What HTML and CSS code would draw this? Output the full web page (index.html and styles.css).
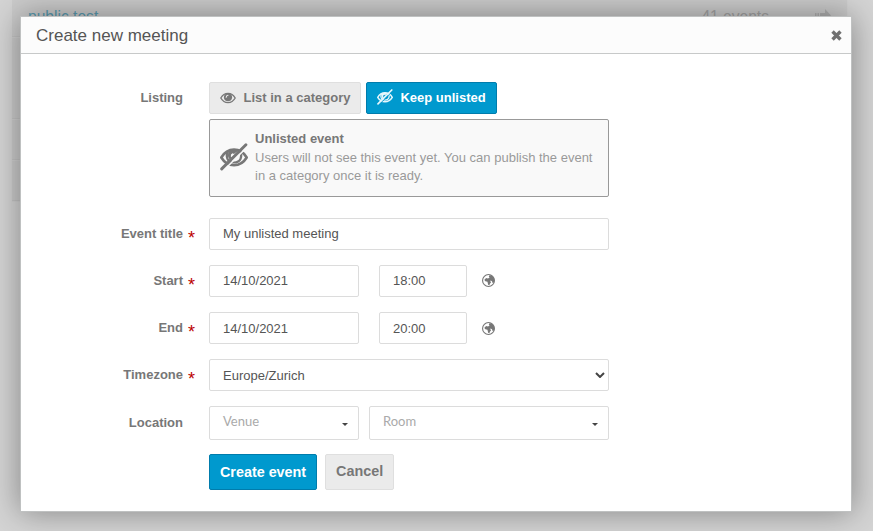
FILE: index.html
```html
<!DOCTYPE html>
<html lang="en">
<head>
<meta charset="utf-8">
<title>Create new meeting</title>
<link rel="stylesheet" href="styles.css">
</head>
<body>
<svg class="defs" aria-hidden="true">
  <symbol id="eye" viewBox="0 0 16 16">
    <path fill="none" stroke="currentColor" stroke-width="1.300" d="M.8 8C2.600 4.800 5 3.400 8 3.400S13.400 4.800 15.200 8C13.400 11.200 11 12.600 8 12.600S2.600 11.200.8 8Z"/>
    <path fill="currentColor" d="M4.600 4.500Q8 2.500 11.400 4.500Q13 8 11 10.200Q8 12.300 5 10.200Q3 8 4.600 4.500Z"/>
    <path fill="none" stroke="#ebebeb" stroke-width="1.100" stroke-linecap="round" d="M6.200 7.200Q6.300 5.500 8 5.300"/>
  </symbol>
  <symbol id="eye-off" viewBox="0 0 28 28">
    <path fill="none" stroke="currentColor" stroke-width="2.600" d="M1.300 14.500C4.500 9 9 6.600 14 6.600s9.500 2.400 12.700 7.900C23.500 19.800 19 22.200 14 22.200S4.500 19.800 1.300 14.500Z"/>
    <path fill="none" stroke="currentColor" stroke-width="2.200" d="M7.800 8.500C5.500 13 7 19.500 14 19.500S22.500 13 20.200 8.500"/>
    <path fill="currentColor" d="M9 7.500q5-2 9.500 0l-4.500 3.500-1.500-.8q-2 1-1.700 3.300l1 1-2 2Q6.500 13 9 7.500Z"/>
    <path fill="none" stroke="var(--cut)" stroke-width="1.700" d="M4 27 28 3"/>
    <path fill="none" stroke="currentColor" stroke-width="2.900" stroke-linecap="round" d="M1.700 25.900 25.900 1.700"/>
  </symbol>
  <symbol id="globe" viewBox="0 0 14 14">
    <circle cx="7" cy="7" r="6.400" fill="none" stroke="currentColor" stroke-width="1.200"/>
    <path fill="currentColor" d="M3 5.300 5 4.400l1.200.4L8.200 4 7.300 3 8.300 1l2.900 1.200L13.200 5l.1 3-1 1.800-1.100-.3-.4-1.600-1.400-.8-.5.500.8 1.500-1.200 1.500L8 12l-1.200-.1-.5-1.700-.4-1.800L3.600 7.800 2.700 6.600Z"/>
  </symbol>
</svg>

<div class="backdrop">
  <div class="listing-page">
    <div class="category first"><span class="name">public test</span><span class="count">41 events</span>
      <svg class="go" viewBox="0 0 17 14"><path d="M0 5h1.500v5H0zM2.500 5H4v5H2.500zM5 5h5V1l6 6.500-6 6.500v-4H5z"/></svg>
    </div>
    <div class="category tall"></div>
    <div class="category"></div>
    <div class="category"></div>
  </div>
</div>

<div class="dialog" role="dialog">
  <header class="dialog-header">
    <h1>Create new meeting</h1>
    <svg class="close" viewBox="0 0 10 10"><path d="M1.400 1.400 8.600 8.600M8.600 1.400 1.400 8.600"/></svg>
  </header>
  <form class="form">
    <div class="row listing">
      <div class="label">Listing</div>
      <div class="field">
        <div class="toggle">
          <button type="button" class="btn"><svg class="icon eye"><use href="#eye"/></svg>List in a category</button>
          <button type="button" class="btn primary"><svg class="icon off"><use href="#eye-off"/></svg>Keep unlisted</button>
        </div>
        <div class="notice">
          <svg class="notice-icon"><use href="#eye-off"/></svg>
          <div class="notice-text"><strong>Unlisted event</strong><p>Users will not see this event yet. You can publish the event in a category once it is ready.</p></div>
        </div>
      </div>
    </div>
    <div class="row">
      <div class="label required">Event title</div>
      <div class="field"><div class="input">My unlisted meeting</div></div>
    </div>
    <div class="row">
      <div class="label required">Start</div>
      <div class="field times"><div class="input date">14/10/2021</div><div class="input time">18:00</div><svg class="globe"><use href="#globe"/></svg></div>
    </div>
    <div class="row end">
      <div class="label required">End</div>
      <div class="field times"><div class="input date">14/10/2021</div><div class="input time">20:00</div><svg class="globe"><use href="#globe"/></svg></div>
    </div>
    <div class="row zone">
      <div class="label required">Timezone</div>
      <div class="field"><div class="input select">Europe/Zurich<svg class="chevron" viewBox="0 0 10 6"><path d="M1 1l4 4 4-4"/></svg></div></div>
    </div>
    <div class="row location">
      <div class="label">Location</div>
      <div class="field places"><div class="input combo venue">Venue<span class="caret"></span></div><div class="input combo room">Room<span class="caret"></span></div></div>
    </div>
    <div class="row actions">
      <div class="buttons"><button type="button" class="btn primary large">Create event</button><button type="button" class="btn large cancel">Cancel</button></div>
    </div>
  </form>
</div>
</body>
</html>
```

FILE: styles.css
```css
* { box-sizing: border-box; }
body {
  margin: 0;
  height: 531px;
  overflow: hidden;
  background: #d4d4d4;
  font: 13px/18px "Liberation Sans", Arial, sans-serif;
  color: #555;
}
.defs { position: absolute; width: 0; height: 0; }
.backdrop { position: absolute; inset: 0; padding: 0 25px 0 12px; }
.listing-page { background: #cbcbcb; border-right: 1px solid #d2d2d2; height: 201px; }
.category { height: 41px; border-bottom: 1px solid #c4c4c4; box-shadow: 0 1px #d0d0d0; }
.category.first { display: flex; height: 37px; padding: 8px 15px 0 16px; font-size: 15.600px; color: #a3a3a3; }
.category.tall { height: 82px; }
.category .name { flex: 1; color: #5a9bb0; }
.category .go { width: 17px; height: 14px; margin: 0 0 0 46px; fill: #b0b0b0; }

.dialog {
  position: relative;
  width: 832px;
  height: 496px;
  margin: 16px 0 0 20px;
  border: 1px solid #bfc1c1;
  background: #fff;
  box-shadow: 0 0 30px rgba(0, 0, 0, .38);
}
.dialog-header {
  display: flex;
  justify-content: space-between;
  align-items: center;
  height: 37px;
  padding: 0 9px 0 15px;
  background: #fcfcfc;
  border-bottom: 1px solid #c7c9c9;
}
.dialog-header h1 { margin: 0; padding-top: 1px; font-size: 17px; font-weight: 400; line-height: 36px; }
.close { width: 11px; height: 11px; }
.close path { stroke: #707070; stroke-width: 3.100; }

.form { padding-top: 28px; }
.row { display: grid; grid-template-columns: 162px 400px; column-gap: 26px; margin-bottom: 15px; }
.label { position: relative; line-height: 31px; text-align: right; font-weight: 700; color: #777; }
.required::after { content: "*"; position: absolute; left: 167px; top: 5px; font-size: 18px; font-weight: 400; color: #b00; }
.listing { margin-bottom: 21px; }
.toggle { display: flex; gap: 5px; margin-bottom: 5px; }
.btn {
  display: flex;
  align-items: center;
  height: 32px;
  padding: 0 10px;
  border: 1px solid #dfdfdf;
  border-radius: 2px;
  background: #ebebeb;
  color: #777;
  font: 700 13px/18px "Liberation Sans", Arial, sans-serif;
}
.btn.primary { border-color: #007cac; background: #0099ce; color: #fff; --cut: #0099ce; }
.icon { width: 16px; height: 16px; margin: -1px 7.500px 0 0; }
.icon.off { color: #e8f7fc; margin: -2px 7.500px 0 -.5px; }
.notice {
  display: flex;
  align-items: center;
  height: 78px;
  padding: 0 10px;
  gap: 7px;
  border: 1px solid #999;
  border-radius: 2px;
  background: #f9f9f9;
  --cut: #f9f9f9;
}
.notice-icon { flex: none; width: 28px; height: 28px; margin-top: -2px; color: #777; }
.notice-text { line-height: 18.500px; }
.notice strong { color: #777; }
.notice p { margin: 0; color: #999; }
.input { display: flex; align-items: center; height: 32px; padding: 0 13px; border: 1px solid #dcdcdc; border-radius: 2px; background: #fff; }
.field.times { display: flex; align-items: center; }
.date { width: 150px; margin-right: 20px; padding-bottom: 1px; }
.time { width: 88px; margin-right: 15px; padding-bottom: 1px; }
.end .input { padding: 1px 13px 0; }
.globe { width: 13px; height: 13px; margin-top: -1px; color: #777; }
.end .globe { margin-top: 1px; }
.select { justify-content: space-between; padding: 1px 3px 0 13px; }
.chevron { width: 10px; height: 6px; margin-top: -1px; }
.chevron path { fill: none; stroke: #444; stroke-width: 2; }
.places { display: flex; gap: 10px; }
.location { margin-bottom: 14px; }
.location .label { line-height: 34px; }
.combo { height: 34px; padding: 0 10px 4px 13px; justify-content: space-between; color: #aaa; font-family: Lato, sans-serif; }
.venue { width: 150px; }
.room { width: 240px; }
.caret { margin-top: 7px; border: 3.500px solid transparent; border-top: 3.500px solid #444; border-bottom: 0; }
.buttons { grid-column: 2; display: flex; gap: 8px; }
.btn.large { height: 36px; font-size: 14.350px; }
.btn.cancel { padding-bottom: 2px; }
```
